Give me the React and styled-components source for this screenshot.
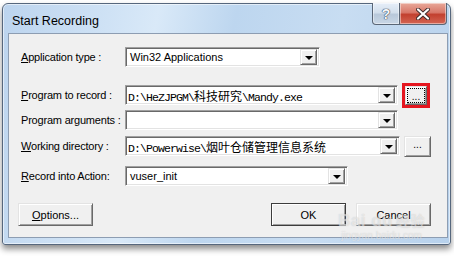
import styled, { createGlobalStyle } from 'styled-components';

const GlobalStyle = createGlobalStyle`
  html, body {
    margin: 0;
    padding: 0;
    background: #ffffff;
  }
  body {
    width: 454px;
    height: 260px;
    overflow: hidden;
    font-family: "Liberation Sans", Arial, sans-serif;
  }
`;

const Window = styled.div`
  position: relative;
  box-sizing: border-box;
  width: 449px;
  height: 242px;
  margin: 3px 0 0 2px;
  padding: 0 2px 6px 5px;
  border: 1px solid #56677d;
  border-radius: 6px 6px 3px 3px;
  background: linear-gradient(100deg, #bcd4ee 0%, #cfe2f5 22%, #d9e9f8 32%, #bdd6ef 48%, #c8ddf2 70%, #b7d1ec 100%);
  box-shadow: 0 4px 6px rgba(0, 0, 0, 0.45), inset 0 0 0 1px rgba(255, 255, 255, 0.55);
  display: flex;
  flex-direction: column;
`;

const TitleBar = styled.div`
  height: 29px;
  display: flex;
  align-items: flex-start;
  justify-content: space-between;
`;

const Title = styled.div`
  margin: 10px 0 0 4px;
  font-family: "Liberation Sans", "Segoe UI", sans-serif;
  font-size: 12.5px;
  color: #000;
`;

const Caption = styled.div`
  display: flex;
  margin: -1px 1px 0 0;
`;

const CaptionButton = styled.div`
  box-sizing: border-box;
  width: ${(p) => p.$w}px;
  height: 22px;
  display: flex;
  align-items: center;
  justify-content: center;
  border: 1px solid #5a6676;
  border-top: none;
  ${(p) => (p.$close
    ? `
    border-left: none;
    border-radius: 0 0 4px 0;
    background: linear-gradient(180deg, #e8a899 0%, #d8786a 45%, #c2402f 55%, #d46553 100%);
    `
    : `
    border-radius: 0 0 0 4px;
    background: linear-gradient(180deg, #e6eef8 0%, #d3dfec 45%, #b8c8da 55%, #c9d7e6 100%);
    `)}
  box-shadow: inset 0 0 0 1px rgba(255, 255, 255, 0.45);
`;

const Help = styled.span`
  font-family: "Liberation Sans", Arial, sans-serif;
  font-weight: bold;
  font-size: 14px;
  color: #f4f7fb;
  text-shadow: 0 0 1px #39475a, 0 0 1px #39475a, 0 0 1px #39475a;
`;

const Panel = styled.div`
  box-sizing: border-box;
  flex: 1;
  background: #f0f0f0;
  border: 1px solid #8d9db2;
  padding-top: 13px;
  display: flex;
  flex-direction: column;
`;

const Row = styled.div`
  display: flex;
  align-items: center;
  height: 20px;
  padding-left: 12px;
  margin-top: ${(p) => p.$gap || 0}px;
`;

const Label = styled.div`
  width: 104px;
  flex: none;
  font-size: 11px;
  letter-spacing: -0.2px;
  color: #000;
  white-space: nowrap;
`;

const Key = styled.span`
  text-decoration: underline;
  text-underline-offset: 1px;
`;

const Combo = styled.div`
  box-sizing: border-box;
  width: ${(p) => p.$w}px;
  height: 20px;
  display: flex;
  align-items: center;
  background: #fff;
  border: 1px solid;
  border-color: #a0a0a0 #fff #fff #a0a0a0;
  box-shadow: inset 1px 1px #696969, inset -1px -1px #e3e3e3;
  padding: 2px;
`;

const ComboText = styled.div`
  flex: 1;
  padding-left: 2px;
  font-size: 11px;
  color: #000;
  white-space: nowrap;
  overflow: hidden;
`;

const PathText = styled.div`
  flex: 1;
  font-family: "Liberation Mono", "Courier New", monospace;
  font-size: 11.5px;
  letter-spacing: -0.9px;
  color: #000;
  white-space: nowrap;
  overflow: hidden;
`;

const Han = styled.span`
  font-family: "Noto Sans CJK SC", sans-serif;
  font-size: 12px;
  letter-spacing: 0;
`;

const ArrowButton = styled.div`
  box-sizing: border-box;
  width: 17px;
  height: 16px;
  flex: none;
  display: flex;
  align-items: center;
  justify-content: center;
  background: #f0f0f0;
  border: 1px solid;
  border-color: #e3e3e3 #696969 #696969 #e3e3e3;
  box-shadow: inset 1px 1px #fff, inset -1px -1px #a0a0a0;
  &::after {
    content: '';
    border-left: 4px solid transparent;
    border-right: 4px solid transparent;
    border-top: 4px solid #000;
    margin-top: 1px;
  }
`;

const Browse = styled.div`
  box-sizing: border-box;
  width: ${(p) => p.$w || 27}px;
  height: ${(p) => p.$h || 21}px;
  margin-left: ${(p) => p.$ml || 0}px;
  flex: none;
  display: flex;
  align-items: center;
  justify-content: center;
  font-size: 10px;
  color: #000;
  background: #f0f0f0;
  border: 1px solid;
  border-color: #e3e3e3 #696969 #696969 #e3e3e3;
  box-shadow: inset 1px 1px #fff, inset -1px -1px #a0a0a0;
  padding-bottom: 3px;
`;

const FocusBox = styled.div`
  box-sizing: border-box;
  width: 18px;
  height: 15px;
  margin-top: 3px;
  border: 1px dotted #000;
  display: flex;
  align-items: flex-end;
  justify-content: center;
  font-size: 10px;
  line-height: 9px;
  padding-bottom: 1px;
`;

const Highlight = styled.div`
  margin-left: 4px;
  border: 3px solid #e5161f;
  display: flex;
`;

const ButtonBar = styled.div`
  display: flex;
  gap: 10px;
  margin-top: 17px;
  padding: 0 16px 0 9px;
`;

const Spacer = styled.div`
  flex: 1;
`;

const Button = styled.div`
  box-sizing: border-box;
  width: 75px;
  height: 23px;
  display: flex;
  align-items: center;
  justify-content: center;
  font-size: 11px;
  color: #000;
  background: #f0f0f0;
  border: 1px solid;
  border-color: ${(p) => (p.$default ? '#3c3c3c' : '#e3e3e3 #696969 #696969 #e3e3e3')};
  box-shadow: inset 1px 1px #fff, inset -1px -1px #a0a0a0;
`;

const Watermark = styled.div`
  position: absolute;
  left: 338px;
  top: 211px;
  display: flex;
  flex-direction: column;
  align-items: center;
  color: rgba(255, 255, 255, 0.5);
  text-shadow: 0 0 1px rgba(120, 120, 120, 0.35);
  pointer-events: none;
`;

const MarkBig = styled.div`
  font-family: "Liberation Sans", Arial, sans-serif;
  font-weight: bold;
  font-size: 17px;
  line-height: 19px;
  letter-spacing: 0.5px;
  white-space: nowrap;
`;

const MarkCjk = styled.span`
  font-family: "Noto Sans CJK SC", sans-serif;
  font-size: 14px;
  margin-left: 3px;
`;

const MarkSmall = styled.div`
  font-family: "Liberation Sans", Arial, sans-serif;
  font-size: 10px;
  line-height: 12px;
`;

const Path = ({ text }) => (
  <PathText>
    {text.split(/([\u4e00-\u9fff]+)/).map((part, i) =>
      /[\u4e00-\u9fff]/.test(part) ? <Han key={i}>{part}</Han> : <span key={i}>{part}</span>
    )}
  </PathText>
);

const CloseGlyph = () => (
  <svg width="14" height="12" viewBox="0 0 14 12">
    <path d="M2 1.5 L12 10.5 M12 1.5 L2 10.5" stroke="#3b2a2a" strokeWidth="4" strokeLinecap="round" />
    <path d="M2 1.5 L12 10.5 M12 1.5 L2 10.5" stroke="#ffffff" strokeWidth="2.2" strokeLinecap="round" />
  </svg>
);

export default function App() {
  return (
    <>
      <GlobalStyle />
      <Window>
        <TitleBar>
          <Title>Start Recording</Title>
          <Caption>
            <CaptionButton $w={28}><Help>?</Help></CaptionButton>
            <CaptionButton $w={47} $close><CloseGlyph /></CaptionButton>
          </Caption>
        </TitleBar>
        <Panel>
          <Row>
            <Label><Key>A</Key>pplication type :</Label>
            <Combo $w={195}>
              <ComboText>Win32 Applications</ComboText>
              <ArrowButton />
            </Combo>
          </Row>
          <Row $gap={18}>
            <Label><Key>P</Key>rogram to record :</Label>
            <Combo $w={273}>
              <Path text={'D:\\HeZJPGM\\科技研究\\Mandy.exe'} />
              <ArrowButton />
            </Combo>
            <Highlight>
              <Browse $w={22} $h={19}>
                <FocusBox>...</FocusBox>
              </Browse>
            </Highlight>
          </Row>
          <Row $gap={5}>
            <Label>Program arguments :</Label>
            <Combo $w={273}>
              <ComboText />
              <ArrowButton />
            </Combo>
          </Row>
          <Row $gap={6}>
            <Label><Key>W</Key>orking directory :</Label>
            <Combo $w={275}>
              <Path text={'D:\\Powerwise\\烟叶仓储管理信息系统'} />
              <ArrowButton />
            </Combo>
            <Browse $ml={4}>...</Browse>
          </Row>
          <Row $gap={10}>
            <Label><Key>R</Key>ecord into Action:</Label>
            <Combo $w={223}>
              <ComboText>vuser_init</ComboText>
              <ArrowButton />
            </Combo>
          </Row>
          <ButtonBar>
            <Button><span><Key>O</Key>ptions...</span></Button>
            <Spacer />
            <Button $default>OK</Button>
            <Button>Cancel</Button>
          </ButtonBar>
        </Panel>
      </Window>
      <Watermark>
        <MarkBig>Bai du<MarkCjk>经验</MarkCjk></MarkBig>
        <MarkSmall>jingyan.baidu.com</MarkSmall>
      </Watermark>
    </>
  );
}
